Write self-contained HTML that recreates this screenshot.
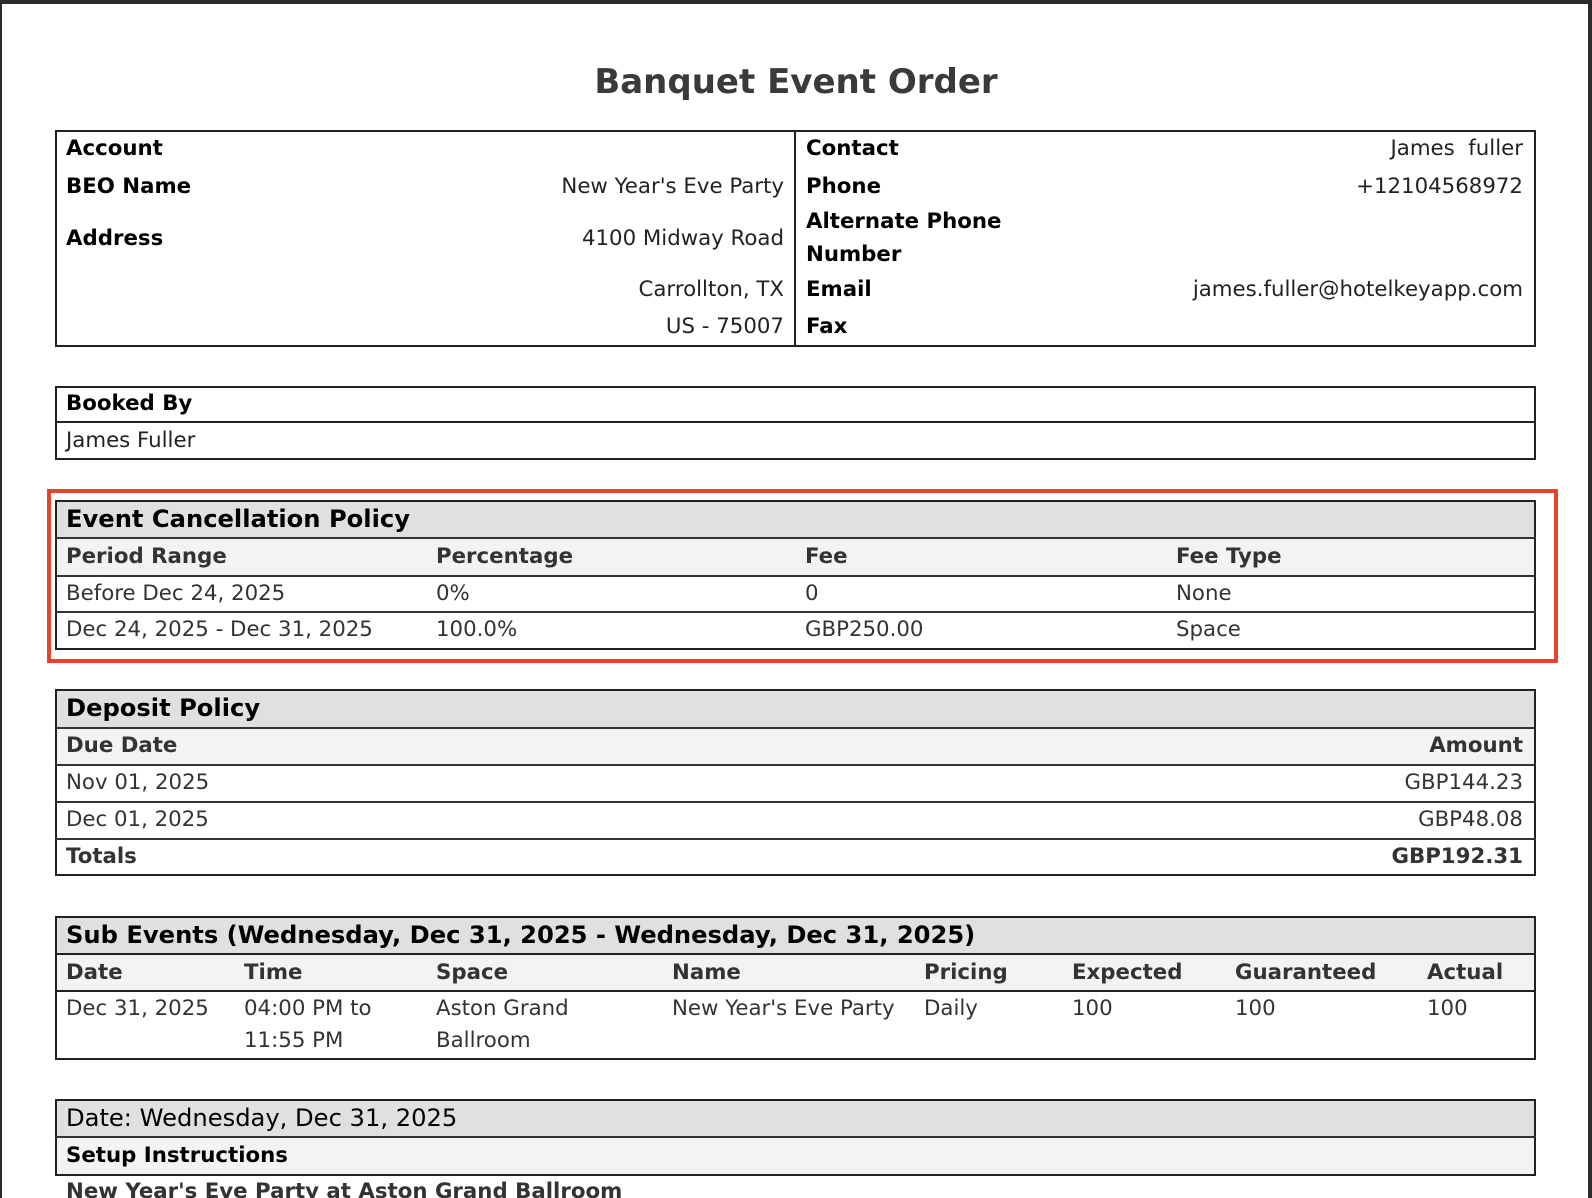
<!DOCTYPE html>
<html><head><meta charset="utf-8"><style>
*{margin:0;padding:0;box-sizing:border-box}
html,body{width:1592px;height:1198px;overflow:hidden;background:#fff}
body{position:relative;font-family:"DejaVu Sans","Liberation Sans",sans-serif;font-size:21.3px;color:#333}
.a{position:absolute;white-space:nowrap;line-height:26px;height:26px}
.b{font-weight:bold}
.k{color:#000}
.r{text-align:right}
.h{font-size:24.2px;height:28px;line-height:28px}
.box{position:absolute;border:2px solid #222}
.fill{position:absolute}
.hl{position:absolute;height:2px;background:#333}
.vl{position:absolute;width:2px;background:#222}
</style></head><body>
<div style="position:absolute;left:0;top:0;width:1592px;height:4px;background:#2b2b2b"></div>
<div style="position:absolute;left:0;top:0;width:2px;height:1198px;background:#2b2b2b"></div>
<div style="position:absolute;right:0;top:0;width:4px;height:1198px;background:#2b2b2b"></div>

<div class="a b" style="left:0;width:1592px;text-align:center;top:60px;height:44px;line-height:44px;font-size:34px;color:#3a3a3a">Banquet Event Order</div>

<div class="box" style="left:55px;top:130px;width:1481px;height:217px"></div>
<div class="vl" style="left:794px;top:130px;height:217px"></div>
<div class="a b k" style="left:66px;top:136px">Account</div>
<div class="a b k" style="left:66px;top:174px">BEO Name</div>
<div class="a b k" style="left:66px;top:226px">Address</div>
<div class="a k r" style="left:400px;width:384px;top:174px;color:#222">New Year's Eve Party</div>
<div class="a k r" style="left:400px;width:384px;top:226px;color:#222">4100 Midway Road</div>
<div class="a k r" style="left:400px;width:384px;top:277px;color:#222">Carrollton, TX</div>
<div class="a k r" style="left:400px;width:384px;top:314px;color:#222">US - 75007</div>
<div class="a b k" style="left:806px;top:136px">Contact</div>
<div class="a b k" style="left:806px;top:174px">Phone</div>
<div class="a b k" style="left:806px;top:209px">Alternate Phone</div>
<div class="a b k" style="left:806px;top:242px">Number</div>
<div class="a b k" style="left:806px;top:277px">Email</div>
<div class="a b k" style="left:806px;top:314px">Fax</div>
<div class="a r" style="left:1000px;width:523px;top:136px;color:#222">James&nbsp; fuller</div>
<div class="a r" style="left:1000px;width:523px;top:174px;color:#222">+12104568972</div>
<div class="a r" style="left:1000px;width:523px;top:277px;color:#222">james.fuller@hotelkeyapp.com</div>

<div class="box" style="left:55px;top:386px;width:1481px;height:74px"></div>
<div class="hl" style="left:55px;top:421px;width:1481px;background:#222"></div>
<div class="a b k" style="left:66px;top:391px">Booked By</div>
<div class="a k" style="left:66px;top:428px;color:#222">James Fuller</div>

<div style="position:absolute;left:47px;top:489px;width:1511px;height:174px;border:4px solid #e8432d"></div>

<div class="fill" style="left:55px;top:500px;width:1481px;height:38px;background:#dfe0e2"></div>
<div class="fill" style="left:55px;top:538px;width:1481px;height:38px;background:#f2f3f5"></div>
<div class="box" style="left:55px;top:500px;width:1481px;height:150px"></div>
<div class="hl" style="left:55px;top:537px;width:1481px"></div>
<div class="hl" style="left:55px;top:575px;width:1481px"></div>
<div class="hl" style="left:55px;top:611px;width:1481px"></div>
<div class="a b k h" style="left:66px;top:505px">Event Cancellation Policy</div>
<div class="a b" style="left:66px;top:544px">Period Range</div>
<div class="a b" style="left:436px;top:544px">Percentage</div>
<div class="a b" style="left:805px;top:544px">Fee</div>
<div class="a b" style="left:1176px;top:544px">Fee Type</div>
<div class="a" style="left:66px;top:581px">Before Dec 24, 2025</div>
<div class="a" style="left:436px;top:581px">0%</div>
<div class="a" style="left:805px;top:581px">0</div>
<div class="a" style="left:1176px;top:581px">None</div>
<div class="a" style="left:66px;top:617px">Dec 24, 2025 - Dec 31, 2025</div>
<div class="a" style="left:436px;top:617px">100.0%</div>
<div class="a" style="left:805px;top:617px">GBP250.00</div>
<div class="a" style="left:1176px;top:617px">Space</div>

<div class="fill" style="left:55px;top:689px;width:1481px;height:39px;background:#dfe0e2"></div>
<div class="fill" style="left:55px;top:728px;width:1481px;height:37px;background:#f2f3f5"></div>
<div class="box" style="left:55px;top:689px;width:1481px;height:187px"></div>
<div class="hl" style="left:55px;top:727px;width:1481px"></div>
<div class="hl" style="left:55px;top:764px;width:1481px"></div>
<div class="hl" style="left:55px;top:801px;width:1481px"></div>
<div class="hl" style="left:55px;top:838px;width:1481px"></div>
<div class="a b k h" style="left:66px;top:694px">Deposit Policy</div>
<div class="a b" style="left:66px;top:733px">Due Date</div>
<div class="a b r" style="left:1200px;width:323px;top:733px">Amount</div>
<div class="a" style="left:66px;top:770px">Nov 01, 2025</div>
<div class="a r" style="left:1200px;width:323px;top:770px">GBP144.23</div>
<div class="a" style="left:66px;top:807px">Dec 01, 2025</div>
<div class="a r" style="left:1200px;width:323px;top:807px">GBP48.08</div>
<div class="a b" style="left:66px;top:844px">Totals</div>
<div class="a b r" style="left:1200px;width:323px;top:844px">GBP192.31</div>

<div class="fill" style="left:55px;top:916px;width:1481px;height:38px;background:#dfe0e2"></div>
<div class="fill" style="left:55px;top:954px;width:1481px;height:37px;background:#f2f3f5"></div>
<div class="box" style="left:55px;top:916px;width:1481px;height:144px"></div>
<div class="hl" style="left:55px;top:953px;width:1481px;background:#222"></div>
<div class="hl" style="left:55px;top:990px;width:1481px;background:#222"></div>
<div class="a b k h" style="left:66px;top:921px">Sub Events (Wednesday, Dec 31, 2025 - Wednesday, Dec 31, 2025)</div>
<div class="a b" style="left:66px;top:960px">Date</div>
<div class="a b" style="left:244px;top:960px">Time</div>
<div class="a b" style="left:436px;top:960px">Space</div>
<div class="a b" style="left:672px;top:960px">Name</div>
<div class="a b" style="left:924px;top:960px">Pricing</div>
<div class="a b" style="left:1072px;top:960px">Expected</div>
<div class="a b" style="left:1235px;top:960px">Guaranteed</div>
<div class="a b" style="left:1427px;top:960px">Actual</div>
<div class="a" style="left:66px;top:996px">Dec 31, 2025</div>
<div class="a" style="left:244px;top:996px">04:00 PM to</div>
<div class="a" style="left:244px;top:1028px">11:55 PM</div>
<div class="a" style="left:436px;top:996px">Aston Grand</div>
<div class="a" style="left:436px;top:1028px">Ballroom</div>
<div class="a" style="left:672px;top:996px">New Year's Eve Party</div>
<div class="a" style="left:924px;top:996px">Daily</div>
<div class="a" style="left:1072px;top:996px">100</div>
<div class="a" style="left:1235px;top:996px">100</div>
<div class="a" style="left:1427px;top:996px">100</div>

<div class="fill" style="left:55px;top:1099px;width:1481px;height:38px;background:#dfe0e2"></div>
<div class="fill" style="left:55px;top:1137px;width:1481px;height:38px;background:#f2f3f5"></div>
<div class="box" style="left:55px;top:1099px;width:1481px;height:77px"></div>
<div class="hl" style="left:55px;top:1136px;width:1481px"></div>
<div class="a k h" style="left:66px;top:1104px">Date: Wednesday, Dec 31, 2025</div>
<div class="a b k" style="left:66px;top:1143px">Setup Instructions</div>
<div class="a b" style="left:66px;top:1179px">New Year's Eve Party at Aston Grand Ballroom</div>
</body></html>
